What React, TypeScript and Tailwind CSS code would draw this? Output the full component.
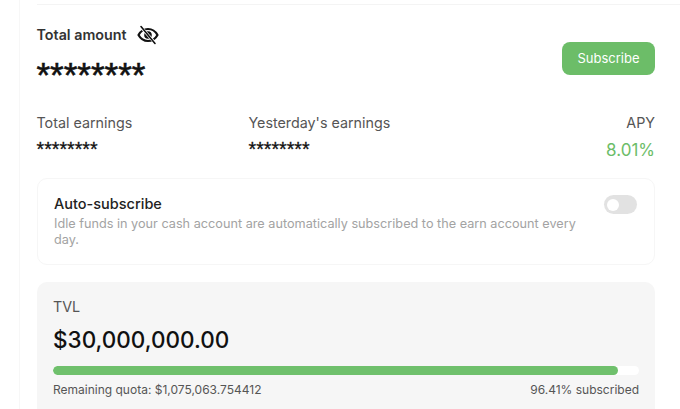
const EyeSlash = () => (
  <svg width="22" height="20" viewBox="0 0 22 20" fill="none" className="text-[#111111]">
    <path
      d="M1.5 10C3.6 6.2 7 4 11 4s7.400 2.200 9.500 6c-2.100 3.800-5.500 6-9.500 6s-7.400-2.200-9.500-6Z"
      stroke="currentColor"
      strokeWidth="2.200"
      strokeLinejoin="round"
    />
    <circle cx="11" cy="10" r="3.800" fill="currentColor" />
    <path d="M4 2l14 16" stroke="white" strokeWidth="2.800" />
    <path d="M4 1.500l14 17" stroke="currentColor" strokeWidth="1.600" strokeLinecap="round" />
  </svg>
);

const EarnPanel = () => {
  return (
    <div className="h-[409px] w-[680px] overflow-hidden bg-white font-['Inter',sans-serif]">
      <div className="ml-[19px] h-full border-l border-[#f7f7f7] pl-[16.500px] pr-[25px]">
        <div className="h-[5px] -mr-[25px] border-b border-[#f4f4f4]" />

        <div className="mt-[20px] flex items-center justify-between">
          <div>
            <div className="flex h-[20px] items-center gap-[10px]">
              <span className="text-[14.3px] font-semibold leading-[20px] text-[#333333]">Total amount</span>
              <EyeSlash />
            </div>
            <div className="mt-[10px] h-[37px] font-['Liberation_Sans',sans-serif] text-[35px] font-normal leading-[40px] text-[#111111] [-webkit-text-stroke:0.6px_#111111]">
              ********
            </div>
          </div>
          <button className="h-[33px] w-[93px] rounded-[8px] bg-[#6cbd68] text-[13px] font-normal text-white">
            Subscribe
          </button>
        </div>

        <div className="mt-[21px] grid grid-cols-[212px_1fr_auto]">
          <div>
            <div className="text-[14.3px] leading-[20px] text-[#555555]">Total earnings</div>
            <div className="mt-[5px] font-['Liberation_Sans',sans-serif] text-[19.600px] font-normal leading-[22px] text-[#111111] [-webkit-text-stroke:0.3px_#111111]">
              ********
            </div>
          </div>
          <div>
            <div className="text-[14.3px] leading-[20px] text-[#555555]">Yesterday's earnings</div>
            <div className="mt-[5px] font-['Liberation_Sans',sans-serif] text-[19.600px] font-normal leading-[22px] text-[#111111] [-webkit-text-stroke:0.3px_#111111]">
              ********
            </div>
          </div>
          <div className="text-right">
            <div className="text-[14.3px] leading-[20px] text-[#555555]">APY</div>
            <div className="mt-[5px] text-[17px] font-normal leading-[24px] text-[#6cbd68]">8.01%</div>
          </div>
        </div>

        <div className="mt-[16px] flex h-[87px] items-start justify-between rounded-[10px] border border-[#f6f6f6] pl-[16.500px] pr-[17px] pt-[14px]">
          <div className="w-[530px]">
            <div className="text-[14.500px] font-medium leading-[22px] text-[#222222]">Auto-subscribe</div>
            <div className="mt-[1px] text-[12.700px] leading-[15.500px] text-[#a3a3a3]">
              Idle funds in your cash account are automatically subscribed to the earn account every day.
            </div>
          </div>
          <div className="mt-[2px] flex h-[19px] w-[33px] items-center rounded-full bg-[#e2e2e2] pl-[3px]">
            <div className="h-[12px] w-[12px] rounded-full bg-white" />
          </div>
        </div>

        <div className="mt-[17px] h-[140px] rounded-[10px] bg-[#f6f6f6] pl-[16.500px] pr-[16px] pt-[15px]">
          <div className="text-[14.300px] leading-[20px] text-[#555555]">TVL</div>
          <div className="mt-[8px] text-[22.500px] font-medium leading-[30px] text-[#111111]">$30,000,000.00</div>
          <div className="mt-[11px] h-[9px] w-full overflow-hidden rounded-full bg-white">
            <div className="h-full rounded-full bg-[#6fc06c]" style={{ width: '96.41%' }} />
          </div>
          <div className="mt-[7px] flex justify-between text-[12px] leading-[16px] text-[#555555]">
            <span>Remaining quota: $1,075,063.754412</span>
            <span>96.41% subscribed</span>
          </div>
        </div>
      </div>
    </div>
  );
};

export default function App() {
  return <EarnPanel />;
}
